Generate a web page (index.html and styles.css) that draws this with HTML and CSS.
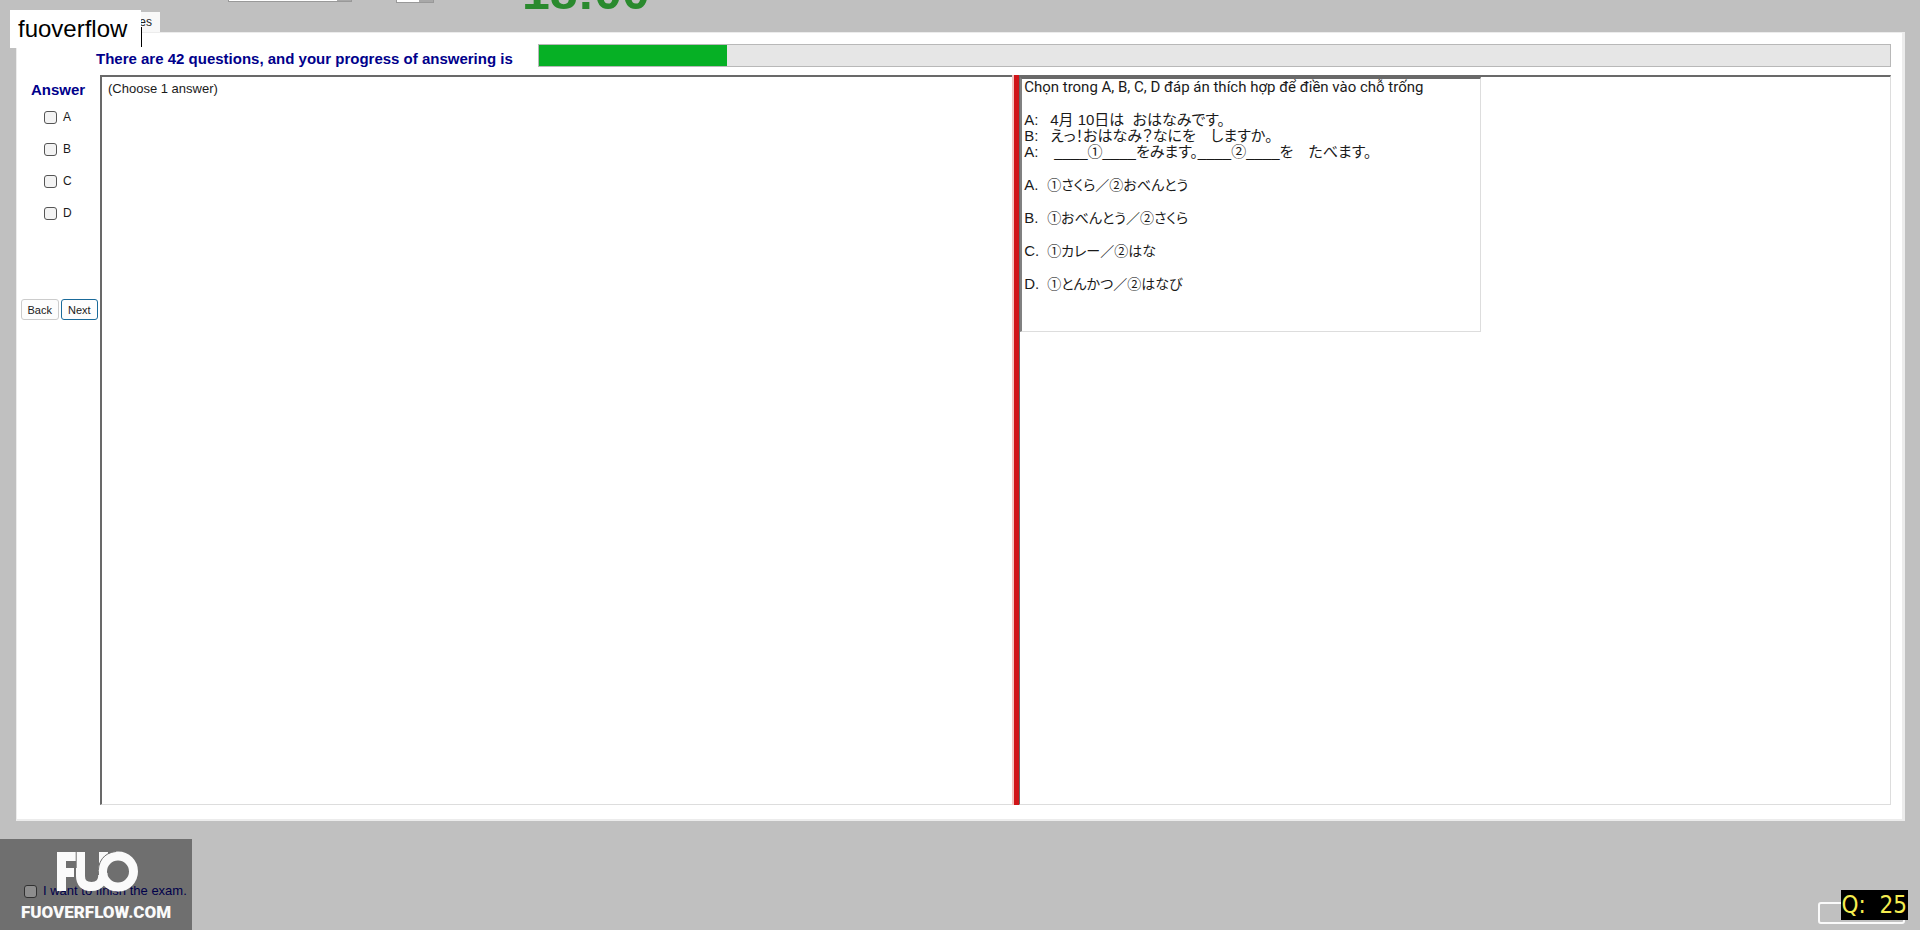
FILE: index.html
```
<!DOCTYPE html>
<html lang="vi">
<head>
<meta charset="utf-8">
<title>fuoverflow</title>
<link rel="stylesheet" href="styles.css">
</head>
<body>
<div class="app">
  <header class="toolbar">
    <select class="picker picker-font" aria-label="Font"></select>
    <select class="picker picker-size" aria-label="Size"></select>
    <span class="timer">18:00</span>
  </header>
  <nav class="tabs"><button class="tab" type="button">es</button></nav>
  <div class="brand">fuoverflow</div>

  <main class="panel">
    <div class="progress-row">
      <label class="progress-label" for="progress">There are 42 questions, and your progress of answering is</label>
      <progress class="progress" id="progress" value="139" max="1000"></progress>
    </div>
    <div class="work">
      <aside class="answers">
        <h2 class="answers-title">Answer</h2>
        <label class="choice"><input class="check" type="checkbox">A</label>
        <label class="choice"><input class="check" type="checkbox">B</label>
        <label class="choice"><input class="check" type="checkbox">C</label>
        <label class="choice"><input class="check" type="checkbox">D</label>
        <div class="nav-buttons">
          <button class="btn" type="button">Back</button>
          <button class="btn btn-next" type="button">Next</button>
        </div>
      </aside>
      <section class="pane pane-left">(Choose 1 answer)</section>
      <div class="splitter"></div>
      <section class="pane pane-right">
        <article class="question">
          <p class="line prompt">Chọn trong A, B, C, D đáp án thích hợp để điền vào chỗ trống</p>
          <div class="dialog" lang="ja">
            <p class="line"><span class="who">A:</span><span class="jp">4月 10日は  おはなみです。</span></p>
            <p class="line"><span class="who">B:</span><span class="jp">えっ！おはなみ？なにを　しますか。</span></p>
            <p class="line"><span class="who">A:</span><span class="jp jp-blank">____①____をみます。____②____を　たべます。</span></p>
          </div>
          <p class="line" lang="ja"><span class="opt">A.</span><span class="jp jp-option">①さくら／②おべんとう</span></p>
          <p class="line" lang="ja"><span class="opt">B.</span><span class="jp jp-option">①おべんとう／②さくら</span></p>
          <p class="line" lang="ja"><span class="opt">C.</span><span class="jp jp-option">①カレー／②はな</span></p>
          <p class="line" lang="ja"><span class="opt">D.</span><span class="jp jp-option">①とんかつ／②はなび</span></p>
        </article>
      </section>
    </div>
  </main>

  <footer class="footer">
    <label class="finish"><input class="check" type="checkbox">I want to finish the exam.</label>
    <button class="exit" type="button" aria-label="Exit"></button>
    <div class="watermark">
      <svg class="logo" viewBox="0 0 84 42" aria-hidden="true">
        <g fill="none" stroke="#fafafa" stroke-width="9">
          <path d="M7.500 40V5.500H22M7.500 21.500H20"/>
          <path d="M26.500 1V25Q26.500 35.500 37.500 35.500Q49 35.500 49 22"/>
          <path d="M49.500 1V12"/>
          <circle cx="64" cy="20.500" r="15.500"/>
        </g>
        <path d="M44.500 24C43 11 50 1.500 62 .5M22.200 1V17" fill="none" stroke="#707070"/>
      </svg>
      <span class="site">FUOVERFLOW.COM</span>
    </div>
    <div class="counter">Q:&nbsp; 25</div>
  </footer>
</div>
</body>
</html>
```
FILE: styles.css
```
* { box-sizing: border-box; }
body {
  margin: 0;
  background: #c0c0c0;
  color: #1a1a1a;
  font-family: "Liberation Sans", "Noto Sans CJK JP", sans-serif;
}
.app {
  position: relative;
  display: flex;
  flex-direction: column;
  min-height: 100vh;
}
.toolbar {
  display: flex;
  align-items: flex-end;
  height: 12px;
  padding-left: 228px;
  overflow: hidden;
}
.picker {
  appearance: none;
  flex: none;
  height: 22px;
  border: 1px solid #999;
  border-radius: 0;
  background: linear-gradient(#a8a8a8, #a8a8a8) right / 14px 100% no-repeat #fff;
}
.picker-font { width: 124px; margin: 0 44px 10px 0; }
.picker-size { width: 38px; margin: 0 88px 9px 0; }
.timer {
  color: #2a8a2e;
  font-size: 50px;
  font-weight: bold;
  line-height: 40px;
}
.tabs {
  display: flex;
  height: 20px;
  padding-left: 18px;
}
.tab {
  width: 142px;
  padding: 0 8px 0 0;
  border: 0;
  background: #f8f8f8;
  color: #222;
  font: 12px "Liberation Sans", sans-serif;
  text-align: right;
}
.brand {
  position: absolute;
  left: 10px;
  top: 10px;
  z-index: 1;
  padding: 0 14px 0 8px;
  background: #fff;
  color: #000;
  font-size: 24px;
  line-height: 38px;
}
.brand::after {
  content: "";
  position: absolute;
  right: -1px;
  top: 17px;
  width: 1px;
  height: 20px;
  background: #000;
}
.panel {
  flex: 1;
  display: flex;
  flex-direction: column;
  margin: 0 15px 0 16px;
  padding: 11px 11px 14px 0;
  border: 1px solid #ececec;
  border-right-width: 3px;
  border-bottom-width: 2px;
  background: #fff;
}
.progress-row {
  display: flex;
  align-items: flex-start;
  gap: 25px;
  padding-left: 79px;
}
.progress-label {
  padding-top: 6px;
  color: #00008b;
  font-size: 15px;
  font-weight: bold;
  line-height: 18px;
}
.progress {
  appearance: none;
  flex: 1;
  height: 23px;
  border: 1px solid #b8b8b8;
  background: #e6e6e6;
}
.progress::-webkit-progress-bar { background: #e6e6e6; }
.progress::-webkit-progress-value { background: #06b025; }
.work {
  flex: 1;
  display: flex;
  padding-top: 7px;
}
.answers {
  flex: none;
  width: 83px;
  padding: 6px 2px 0 4px;
}
.answers-title {
  margin: 0 0 10px;
  padding-left: 10px;
  color: #00008b;
  font-size: 15px;
  line-height: 18px;
}
.choice {
  display: flex;
  align-items: center;
  gap: 6px;
  height: 16px;
  margin: 0 0 16px 23px;
  font-size: 12px;
}
.check {
  appearance: none;
  flex: none;
  width: 13px;
  height: 13px;
  margin: 0;
  border: 1px solid #555;
  border-radius: 3px;
  background: #f3f3f3;
}
.nav-buttons {
  display: flex;
  gap: 2px;
  margin-top: 78px;
}
.btn {
  flex: 1;
  height: 21px;
  padding: 0;
  border: 1px solid #ccc;
  border-radius: 3px;
  background: #fdfdfd;
  color: #1a1a1a;
  font: 11px "Liberation Sans", sans-serif;
}
.btn-next { border-color: #1a6a9a; }
.pane {
  border: 1px solid #ddd;
  border-top: 2px solid #696969;
  border-left: 2px solid #696969;
}
.pane-left {
  flex: 508;
  padding: 3px 6px;
  border-right: 0;
  font-size: 13px;
  line-height: 18px;
}
.splitter {
  flex: none;
  width: 7px;
  border-left: 2px solid #f4c4c0;
  background: #d01418;
}
.pane-right { flex: 492; border-left-width: 1px; }
.question {
  display: flex;
  flex-direction: column;
  gap: 17px;
  width: 53%;
  min-height: 255px;
  padding: 0 2px;
  border: 1px solid #ddd;
  border-top: 2px solid #696969;
  border-left: 2px solid #808080;
  font-size: 15px;
}
.line {
  display: flex;
  margin: 0;
  line-height: 16px;
  white-space: pre;
}
.prompt { font-family: Roboto, "Liberation Sans", sans-serif; }
.who { width: 26px; }
.opt { width: 23px; }
.jp { font-feature-settings: "palt"; }
.jp-blank { padding-left: 4px; }
.jp-option { font-size: 14px; }
.footer {
  position: relative;
  flex: none;
  height: 109px;
}
.finish {
  display: flex;
  align-items: center;
  gap: 6px;
  padding: 61px 0 0 24px;
  color: #000080;
  font-size: 13px;
  line-height: 18px;
}
.exit {
  position: absolute;
  right: 15px;
  bottom: 6px;
  width: 87px;
  height: 22px;
  border: 2px solid #fafafa;
  border-radius: 3px;
  background: #c0c0c0;
}
.watermark {
  position: absolute;
  left: 0;
  bottom: 0;
  display: flex;
  flex-direction: column;
  align-items: center;
  width: 192px;
  height: 91px;
  padding-top: 12px;
  background: rgba(0, 0, 0, 0.42);
}
.logo { width: 84px; height: 42px; }
.site {
  margin-top: 8px;
  color: #fafafa;
  font: 900 17px/22px Roboto, "Liberation Sans", sans-serif;
}
.counter {
  position: absolute;
  right: 12px;
  bottom: 10px;
  padding: 0 1px;
  background: #000;
  color: #f4ec50;
  font: 24px/30px "DejaVu Sans Condensed", "DejaVu Sans", sans-serif;
}
```
